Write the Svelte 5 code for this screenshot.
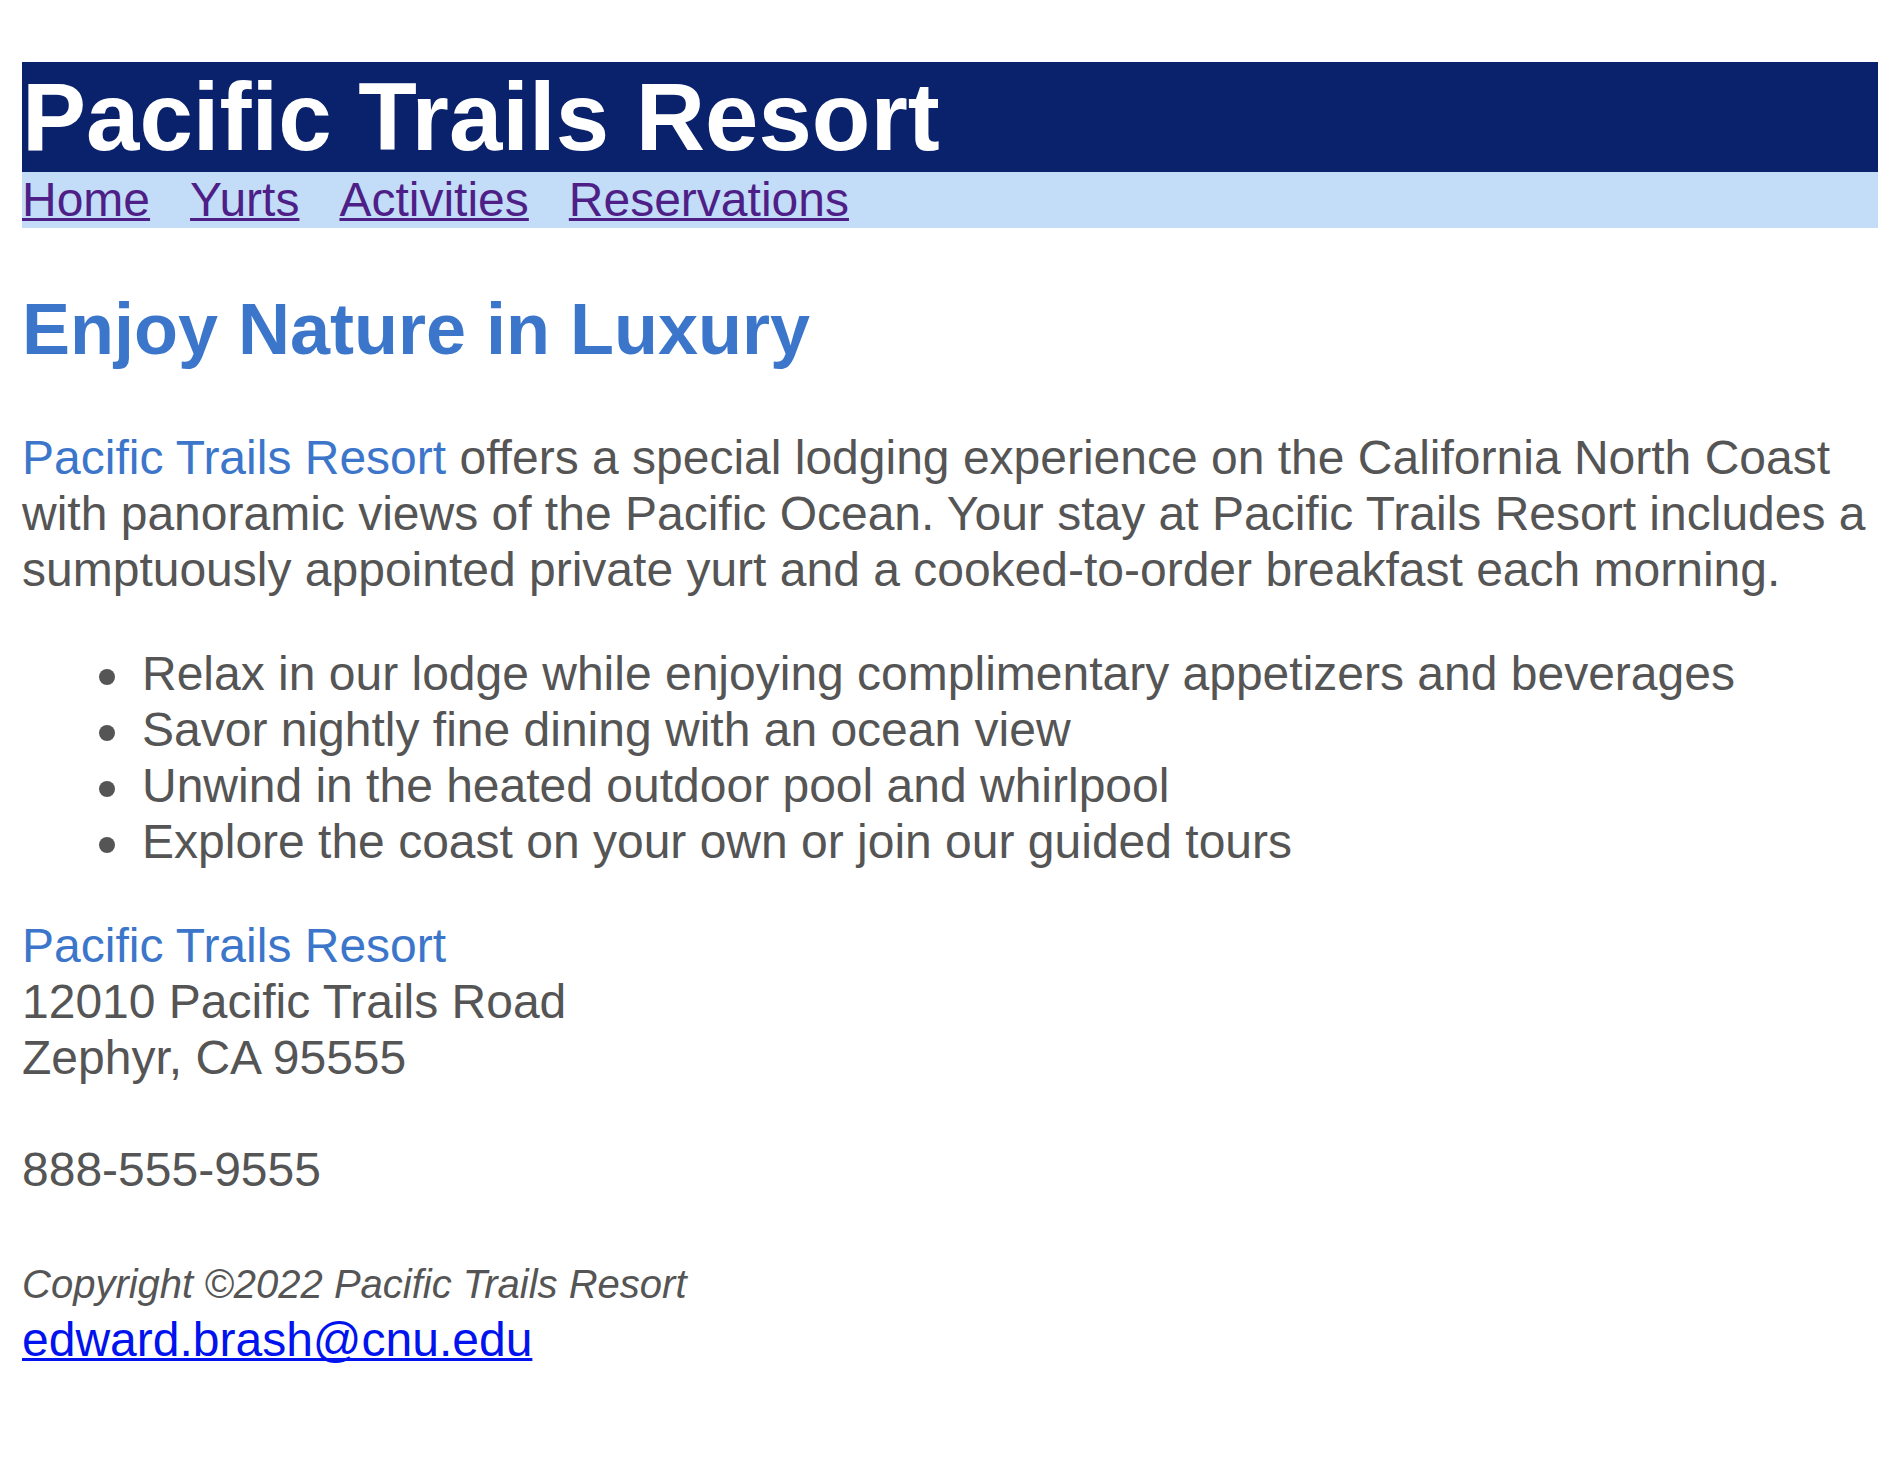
<script>
  const links = ['Home', 'Yurts', 'Activities', 'Reservations'];
  const features = [
    'Relax in our lodge while enjoying complimentary appetizers and beverages',
    'Savor nightly fine dining with an ocean view',
    'Unwind in the heated outdoor pool and whirlpool',
    'Explore the coast on your own or join our guided tours'
  ];
</script>

<div class="page">
  <header><h1>Pacific Trails Resort</h1></header>
  <nav>
    {#each links as link}
      <a href={'#' + link.toLowerCase()}>{link}</a>
    {/each}
  </nav>
  <main>
    <h2>Enjoy Nature in Luxury</h2>
    <p><span class="resort">Pacific Trails Resort</span> offers a special lodging experience on the California North Coast with panoramic views of the Pacific Ocean. Your stay at Pacific Trails Resort includes a sumptuously appointed private yurt and a cooked-to-order breakfast each morning.</p>
    <ul>
      {#each features as feature}
        <li>{feature}</li>
      {/each}
    </ul>
    <div class="contact">
      <span class="resort">Pacific Trails Resort</span><br />
      12010 Pacific Trails Road<br />
      Zephyr, CA 95555<br /><br />
      888-555-9555<br /><br />
    </div>
  </main>
  <footer>
    <small>Copyright ©2022 Pacific Trails Resort</small><br />
    <a href="mailto:edward.brash@cnu.edu">edward.brash@cnu.edu</a>
  </footer>
</div>

<style>
  :global(body) {
    margin: 0;
    background: #fff;
  }
  .page {
    padding: 62px 0 0 22px;
    color: #555;
    font: 48px/56px "Liberation Sans", Arial, sans-serif;
  }
  h1 {
    margin: 0;
    background: #0a226b;
    color: #fff;
    font-size: 96px;
    line-height: 110px;
  }
  nav {
    display: flex;
    gap: 40px;
    background: #c3ddf8;
  }
  a {
    text-decoration-thickness: 3px;
    text-underline-offset: 2px;
    text-decoration-skip-ink: none;
  }
  nav a {
    color: #4e1f87;
  }
  h2 {
    margin: 60px 0;
    color: #3c76cb;
    font-size: 72px;
    line-height: 82px;
  }
  p,
  ul {
    margin: 0 0 48px;
  }
  ul {
    padding-left: 77px;
    list-style: none;
  }
  li {
    display: flex;
    gap: 27px;
  }
  li::before {
    content: '';
    flex: none;
    width: 16px;
    height: 16px;
    margin-top: 23px;
    border-radius: 50%;
    background: currentColor;
  }
  .resort {
    color: #3c76cb;
  }
  footer small {
    font-size: 40px;
    font-style: italic;
  }
  footer a {
    color: #0012ee;
  }
</style>
